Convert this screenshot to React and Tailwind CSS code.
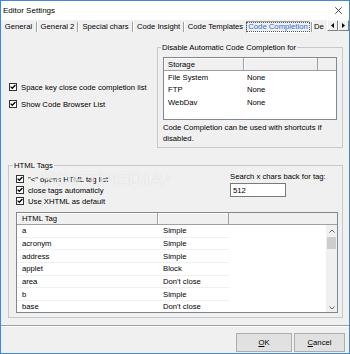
import React from 'react';

// Small classic checkbox, always ticked here
const Check = () => (
  <span className="w-[8px] h-[8px] border border-[#333] bg-white flex items-center justify-center shrink-0">
    <svg width="6" height="6" viewBox="0 0 6 6">
      <path d="M0.6 2.6 L2.3 4.3 L5.4 1" stroke="#000" strokeWidth="1.3" fill="none" />
    </svg>
  </span>
);

const CheckRow = ({ label }) => (
  <div className="flex items-center h-[11px] gap-[4px]">
    <Check />
    <span className="whitespace-nowrap">{label}</span>
  </div>
);

const Sep = () => (
  <span className="w-[2px] h-[10px] border-l border-l-[#a0a0a0] border-r border-r-white shrink-0" />
);

const Tab = ({ w, children }) => (
  <span className={`${w} h-full flex items-center justify-center whitespace-nowrap shrink-0`}>{children}</span>
);

export default function App() {
  const storage = [
    ['File System', 'None'],
    ['FTP', 'None'],
    ['WebDav', 'None'],
  ];
  const tags = [
    ['a', 'Simple'],
    ['acronym', 'Simple'],
    ['address', 'Simple'],
    ['applet', 'Block'],
    ['area', "Don't close"],
    ['b', 'Simple'],
    ['base', "Don't close"],
  ];

  return (
    <div className="relative w-[350px] h-[354px] flex flex-col bg-[#f0f0f0] border border-[#3f8ad6] font-['Liberation_Sans',Arial,sans-serif] text-[7.7px] leading-[11px] text-black overflow-hidden">
      {/* title bar */}
      <div className="h-[19px] bg-white flex items-center justify-between pl-[2px] pr-[7px] shrink-0">
        <span className="text-[8px]">Editor Settings</span>
        <svg width="7" height="7" viewBox="0 0 7 7">
          <path d="M0.3 0.3 L6.7 6.7 M6.7 0.3 L0.3 6.7" stroke="#222" strokeWidth="0.8" />
        </svg>
      </div>

      {/* tabs */}
      <div className="h-[13px] flex items-center shrink-0">
        <Tab w="w-[35px]">General</Tab>
        <Sep />
        <Tab w="w-[39px]">General 2</Tab>
        <Sep />
        <Tab w="w-[53px]">Special chars</Tab>
        <Sep />
        <Tab w="w-[49px]">Code Insight</Tab>
        <Sep />
        <Tab w="w-[61px]">Code Templates</Tab>
        <span className="w-[64px] h-[12px] flex items-center justify-center border-t border-l border-t-[#a0a0a0] border-l-[#a0a0a0] border-b border-r border-b-white border-r-white shrink-0">
          <span className="px-[1px] h-[10px] flex items-center border border-dotted border-[#555] text-[#2a6fd3] whitespace-nowrap">
            Code Completion
          </span>
        </span>
        <span className="w-[1px] shrink-0" />
        <Sep />
        <span className="w-[12px] h-full flex items-center pl-[1px] whitespace-nowrap shrink-0">De</span>
        <div className="ml-[2px] flex self-start h-[11px]">
          <span className="w-[11px] h-full flex items-center justify-center bg-[#f0f0f0] border border-t-white border-l-white border-b-[#808080] border-r-[#808080]">
            <svg width="3" height="5" viewBox="0 0 3 5"><path d="M3 0 L0 2.5 L3 5 Z" fill="#000" /></svg>
          </span>
          <span className="w-[11px] h-full flex items-center justify-center bg-[#f0f0f0] border border-t-white border-l-white border-b-[#808080] border-r-[#808080]">
            <svg width="3" height="5" viewBox="0 0 3 5"><path d="M0 0 L3 2.5 L0 5 Z" fill="#000" /></svg>
          </span>
        </div>
      </div>

      {/* top section */}
      <div className="flex shrink-0">
        <div className="w-[156px] pl-[8px] pt-[48.5px] flex flex-col gap-[6px]">
          <CheckRow label="Space key close code completion list" />
          <CheckRow label="Show Code Browser List" />
        </div>
        <fieldset className="mt-[8.5px] w-[186px] h-[106.5px] border border-[#c8c8c8] pl-[5px] pb-[3px]">
          <legend className="ml-[-2px] px-[1px] bg-[#f0f0f0] whitespace-nowrap">Disable Automatic Code Completion for</legend>
          <div className="mt-[4.5px] w-[174px] h-[63px] bg-white border border-[#828790] flex flex-col overflow-hidden">
            <div className="h-[13px] flex shrink-0">
              <div className="w-[80px] flex items-center pl-[4px] bg-[#f0f0f0] border-r border-b border-[#a0a0a0] shadow-[inset_1px_1px_0_#fff]">Storage</div>
              <div className="w-[74px] bg-[#f0f0f0] border-r border-b border-[#a0a0a0] shadow-[inset_1px_1px_0_#fff]" />
              <div className="flex-1 bg-[#f0f0f0] border-b border-[#a0a0a0]" />
            </div>
            {storage.map(([name, val]) => (
              <div key={name} className="h-[12.5px] flex items-center shrink-0">
                <span className="w-[80px] pl-[4px]">{name}</span>
                <span className="pl-[3px]">{val}</span>
              </div>
            ))}
          </div>
          <div className="mt-[2px] whitespace-nowrap">
            Code Completion can be used with shortcuts if
            <br />
            disabled.
          </div>
        </fieldset>
      </div>

      {/* HTML tags group */}
      <fieldset className="mt-[11.5px] ml-[7px] w-[335px] h-[158.5px] border border-[#c8c8c8] pl-[7px] pb-[4px] shrink-0">
        <legend className="ml-[-3px] px-[1px] bg-[#f0f0f0]">HTML Tags</legend>
        <div className="flex">
          <div className="w-[214px] pt-[3px] flex flex-col">
            <CheckRow label={'"<" opens HTML tag list'} />
            <CheckRow label="close tags automaticly" />
            <CheckRow label="Use XHTML as default" />
          </div>
          <div className="flex flex-col">
            <span className="whitespace-nowrap">Search x chars back for tag:</span>
            <div className="mt-[1.5px] w-[56px] h-[14px] bg-white border border-[#7a7a7a] flex items-center pl-[2px]">512</div>
          </div>
        </div>
        <div className="mt-[5.5px] w-[322px] h-[101px] bg-white border border-[#828790] flex flex-col overflow-hidden">
          <div className="h-[12px] flex shrink-0">
            <div className="w-[141px] flex items-center pl-[5px] bg-[#f0f0f0] border-r border-b border-[#a0a0a0] shadow-[inset_1px_1px_0_#fff]">HTML Tag</div>
            <div className="w-[71px] bg-[#f0f0f0] border-r border-b border-[#a0a0a0] shadow-[inset_1px_1px_0_#fff]" />
            <div className="flex-1 bg-[#f0f0f0] border-b border-[#a0a0a0]" />
          </div>
          <div className="flex-1 flex">
            <div className="flex-1 flex flex-col">
              {tags.map(([tag, mode]) => (
                <div key={tag} className="w-[212px] h-[12.7px] flex items-center border-b border-[#f0f0f0] shrink-0">
                  <span className="w-[141px] pl-[5px]">{tag}</span>
                  <span className="pl-[5px] whitespace-nowrap">{mode}</span>
                </div>
              ))}
            </div>
            <div className="w-[11px] bg-[#f0f0f0] flex flex-col items-center">
              <div className="h-[11px] flex items-center justify-center">
                <svg width="6" height="4" viewBox="0 0 6 4"><path d="M0.5 3.5 L3 1 L5.5 3.5" stroke="#606060" strokeWidth="1" fill="none" /></svg>
              </div>
              <div className="mt-[1px] w-[9px] h-[12px] bg-[#cdcdcd]" />
              <div className="flex-1" />
              <div className="h-[11px] flex items-center justify-center">
                <svg width="6" height="4" viewBox="0 0 6 4"><path d="M0.5 0.5 L3 3 L5.5 0.5" stroke="#606060" strokeWidth="1" fill="none" /></svg>
              </div>
            </div>
          </div>
        </div>
      </fieldset>

      {/* bottom bar */}
      <div className="mt-[7px] h-[2px] border-t border-t-[#a0a0a0] border-b border-b-white shrink-0" />
      <div className="mt-[6px] flex justify-end gap-[2px] pr-[4px] shrink-0">
        <button className="w-[56px] h-[19px] bg-[#e1e1e1] border border-[#adadad] flex items-center justify-center">
          <span><span className="underline">O</span>K</span>
        </button>
        <button className="w-[51px] h-[19px] bg-[#e1e1e1] border border-[#adadad] flex items-center justify-center">
          <span><span className="underline">C</span>ancel</span>
        </button>
      </div>

      {/* watermark */}
      <div className="absolute left-[40px] top-[166px] text-[21px] leading-[24px] font-bold text-white/70 tracking-[0.5px] pointer-events-none [text-shadow:0_0_1px_rgba(0,0,0,0.15)]">
        SOFTPEDIA<span className="text-[7px] align-top">®</span>
      </div>
    </div>
  );
}
